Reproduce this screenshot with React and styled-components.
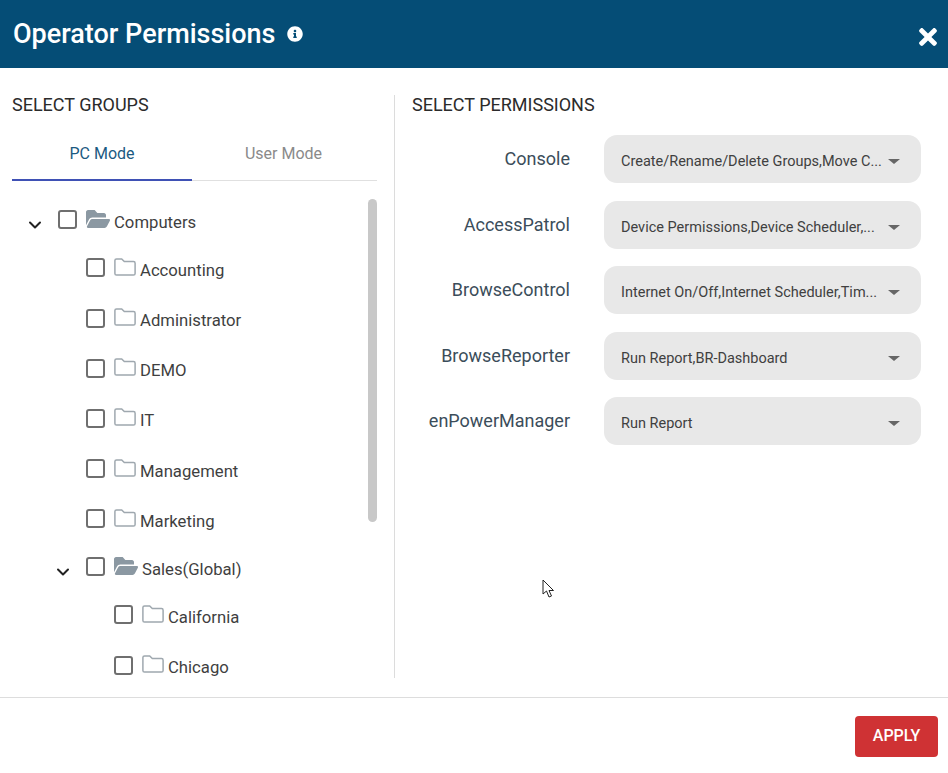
import React from 'react';
import styled, { createGlobalStyle } from 'styled-components';
import { FaInfoCircle, FaTimes, FaFolderOpen } from 'react-icons/fa';
import { ChevronDown } from 'lucide-react';

const GlobalStyle = createGlobalStyle`
  * {
    margin: 0;
    padding: 0;
    box-sizing: border-box;
  }

  body {
    font-family: Roboto, "Liberation Sans", sans-serif;
    background-color: #ffffff;
  }
`;

const Dialog = styled.div`
  position: relative;
  width: 948px;
  height: 773px;
  display: flex;
  flex-direction: column;
  overflow: hidden;
`;

const Header = styled.header`
  height: 68px;
  flex: none;
  display: flex;
  align-items: center;
  background-color: #054d76;
  color: #ffffff;
  padding: 0 11px 0 13px;
`;

const Title = styled.h1`
  font-size: 27px;
  font-weight: 500;
  line-height: 32px;
`;

const InfoIcon = styled(FaInfoCircle)`
  width: 16px;
  height: 16px;
  margin-left: 11px;
`;

const CloseIcon = styled(FaTimes)`
  width: 18px;
  height: 26px;
  margin: 6px 0 0 auto;
`;

const Body = styled.main`
  flex: 1;
  min-height: 0;
  display: flex;
  padding: 27px 0 19px;
`;

const GroupsColumn = styled.section`
  width: 395px;
  flex: none;
  display: flex;
  flex-direction: column;
  border-right: 1px solid #dcdcdc;
  padding: 0 17px 0 12px;
`;

const PermissionsColumn = styled.section`
  flex: 1;
  padding: 0 27px 0 17px;
`;

const SectionTitle = styled.h2`
  font-size: 18px;
  font-weight: 400;
  line-height: 20px;
  color: #2b2b2b;
  text-transform: uppercase;
`;

const Tabs = styled.div`
  display: flex;
  flex: none;
  height: 54px;
  margin-top: 12px;
  border-bottom: 1px solid #e0e0e0;
`;

const Tab = styled.div`
  flex: none;
  width: ${(p) => (p.$active ? '180px' : '183px')};
  height: 54px;
  display: flex;
  justify-content: center;
  align-items: center;
  font-size: 16px;
  color: ${(p) => (p.$active ? '#1b5a82' : '#8a8a8a')};
  border-bottom: 2px solid ${(p) => (p.$active ? '#3f51b5' : 'transparent')};
`;

const TreeArea = styled.div`
  flex: 1;
  display: flex;
  min-height: 0;
  margin-top: 18px;
  overflow: hidden;
`;

const Tree = styled.ul`
  flex: 1;
  list-style: none;
`;

const Row = styled.li`
  display: flex;
  align-items: center;
  height: ${(p) => (p.$open ? '45.8px' : '50.2px')};
  padding-left: ${(p) => 16 + p.$level * 28}px;
`;

const Toggle = styled(ChevronDown)`
  width: 20px;
  height: 20px;
  margin: 6px 0 0 -3px;
  color: #222222;
`;

const ToggleSlot = styled.span`
  width: 30px;
  flex: none;
  display: flex;
  align-items: center;
`;

const Checkbox = styled.span`
  width: 19px;
  height: 19px;
  flex: none;
  margin-top: -4px;
  border: 2px solid #6f6f6f;
  border-radius: 3px;
`;

const OpenFolder = styled(FaFolderOpen)`
  width: 24px;
  height: 24px;
  flex: none;
  margin: -6px 4px 0 9px;
  color: #8b98a2;
`;

const FolderSvg = styled.svg`
  width: 22px;
  height: 18px;
  flex: none;
  margin: -6px 4px 0 9px;
  fill: none;
  stroke: #9fa8af;
  stroke-width: 1.5;
`;

const ClosedFolder = () => (
  <FolderSvg viewBox="0 0 22 18">
    <path d="M2.5 1h5.2l2.6 2.6h9.2a1.6 1.6 0 0 1 1.6 1.6v10.2a1.6 1.6 0 0 1-1.6 1.6h-17a1.6 1.6 0 0 1-1.6-1.6v-12.8a1.6 1.6 0 0 1 1.6-1.6z" />
  </FolderSvg>
);

const RowLabel = styled.span`
  font-size: 16.7px;
  line-height: 20px;
  margin-top: 2px;
  color: #3f3f3f;
`;

const ScrollTrack = styled.div`
  width: 9px;
  flex: none;
`;

const ScrollThumb = styled.div`
  height: 323px;
  border-radius: 5px;
  background-color: #c8c8c8;
`;

const PermissionList = styled.div`
  display: grid;
  grid-template-columns: 158px 317px;
  column-gap: 34px;
  row-gap: 17.5px;
  margin-top: 20px;
`;

const PermissionLabel = styled.label`
  font-size: 18px;
  line-height: 22px;
  color: #3b4d5a;
  text-align: right;
  align-self: center;
`;

const Select = styled.div`
  height: 48px;
  display: flex;
  align-items: center;
  justify-content: space-between;
  padding: 5px 21px 0 17px;
  border-radius: 13px;
  background-color: #e8e8e8;
  font-size: 14.5px;
  color: #404040;
`;

const Caret = styled.span`
  width: 0;
  height: 0;
  border-left: 6px solid transparent;
  border-right: 6px solid transparent;
  border-top: 5px solid #666666;
`;

const Footer = styled.footer`
  height: 76px;
  flex: none;
  display: flex;
  justify-content: flex-end;
  align-items: flex-start;
  border-top: 1px solid #dddddd;
  padding: 18px 10px 0 0;
`;

const ApplyButton = styled.button`
  width: 83px;
  height: 41px;
  border: none;
  border-radius: 4px;
  padding-bottom: 2px;
  background-color: #cf3234;
  color: #ffffff;
  font-family: inherit;
  font-size: 16px;
  font-weight: 500;
`;

const Pointer = styled.svg`
  position: absolute;
  left: 542px;
  top: 579px;
  width: 14px;
  height: 20px;
`;

const groups = [
  { name: 'Computers', level: 0, open: true },
  { name: 'Accounting', level: 1 },
  { name: 'Administrator', level: 1 },
  { name: 'DEMO', level: 1 },
  { name: 'IT', level: 1 },
  { name: 'Management', level: 1 },
  { name: 'Marketing', level: 1 },
  { name: 'Sales(Global)', level: 1, open: true },
  { name: 'California', level: 2 },
  { name: 'Chicago', level: 2 },
];

const permissions = [
  { name: 'Console', value: 'Create/Rename/Delete Groups,Move C...' },
  { name: 'AccessPatrol', value: 'Device Permissions,Device Scheduler,...' },
  { name: 'BrowseControl', value: 'Internet On/Off,Internet Scheduler,Tim...' },
  { name: 'BrowseReporter', value: 'Run Report,BR-Dashboard' },
  { name: 'enPowerManager', value: 'Run Report' },
];

const App = () => {
  return (
    <Dialog>
      <GlobalStyle />
      <Header>
        <Title>Operator Permissions</Title>
        <InfoIcon />
        <CloseIcon />
      </Header>

      <Body>
        <GroupsColumn>
          <SectionTitle>Select Groups</SectionTitle>
          <Tabs>
            <Tab $active>PC Mode</Tab>
            <Tab>User Mode</Tab>
          </Tabs>
          <TreeArea>
            <Tree>
              {groups.map((group) => (
                <Row key={group.name} $level={group.level} $open={group.open}>
                  <ToggleSlot>{group.open && <Toggle strokeWidth={2.4} />}</ToggleSlot>
                  <Checkbox />
                  {group.open ? <OpenFolder preserveAspectRatio="none" /> : <ClosedFolder />}
                  <RowLabel>{group.name}</RowLabel>
                </Row>
              ))}
            </Tree>
            <ScrollTrack>
              <ScrollThumb />
            </ScrollTrack>
          </TreeArea>
        </GroupsColumn>

        <PermissionsColumn>
          <SectionTitle>Select Permissions</SectionTitle>
          <PermissionList>
            {permissions.map((permission) => (
              <React.Fragment key={permission.name}>
                <PermissionLabel>{permission.name}</PermissionLabel>
                <Select>
                  <span>{permission.value}</span>
                  <Caret />
                </Select>
              </React.Fragment>
            ))}
          </PermissionList>
        </PermissionsColumn>
      </Body>

      <Footer>
        <ApplyButton>APPLY</ApplyButton>
      </Footer>

      <Pointer viewBox="0 0 14 20">
        <path d="M1 1 L1 15 L4.5 12 L7 18 L9.5 17 L7 11.5 L11.5 11.5 Z" fill="#ffffff" stroke="#222222" strokeWidth="1" />
      </Pointer>
    </Dialog>
  );
};

export default App;
